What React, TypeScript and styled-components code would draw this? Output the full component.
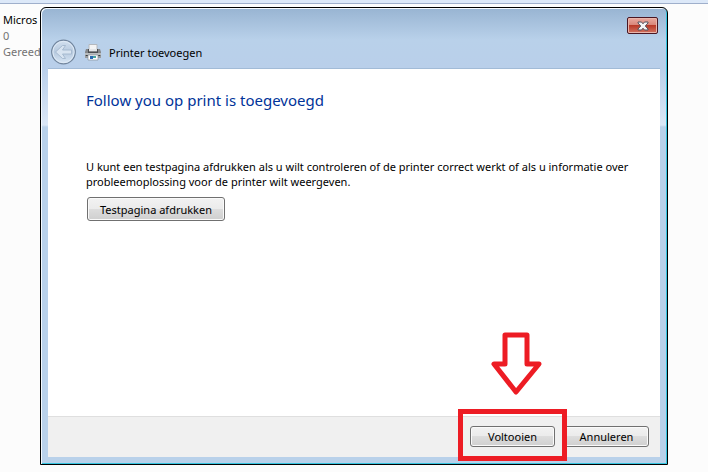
import React from 'react';
import styled, { createGlobalStyle } from 'styled-components';

const GlobalStyle = createGlobalStyle`
  *, *::before, *::after { box-sizing: border-box; }
  body {
    margin: 0;
    background: #fcfcfc;
    color: #000;
    font-family: "Noto Sans", "Segoe UI", sans-serif;
    font-size: 11px;
    line-height: 15px;
  }
`;

const Desktop = styled.div`
  position: relative;
  min-height: 100vh;
  overflow: hidden;
`;

const ToolbarEdge = styled.div`
  height: 4px;
  background: #dce8f8;
  border-bottom: 1px solid #9fafcb;
`;

const PrinterStatus = styled.section`
  display: grid;
  justify-items: start;
  padding: 8px 3px;
  line-height: 16px;
`;

const StatusLine = styled.span<{ $muted?: boolean }>`
  color: ${({ $muted }) => ($muted ? '#737373' : '#000')};
`;

const Dialog = styled.main`
  position: absolute;
  inset: 7px 40px;
  display: flex;
  flex-direction: column;
  padding: 0 7px 7px;
  border: 1px solid #000;
  border-radius: 6px 6px 0 0;
  background: linear-gradient(#98b4d2, #b9d1ea 32px, #b9cfea 60px, #dbe7f6 117px, #b9d1ea 119px);
  box-shadow: inset 1px 1px #f4faff, inset -1px -1px #35c5e0;
`;

const TitleBar = styled.header`
  display: flex;
  justify-content: space-between;
  height: 61px;
  border-bottom: 1px solid #a2bbd7;
`;

const Caption = styled.div`
  display: flex;
  align-items: center;
  gap: 8px;
  padding: 28px 0 0 2px;
`;

const BackButton = styled.button`
  display: flex;
  width: 26px;
  height: 26px;
  padding: 0;
  border: 0;
  background: none;
`;

const Title = styled.h1`
  margin: 0;
  font-size: 11px;
  font-weight: 400;
`;

const CloseButton = styled.button`
  display: flex;
  align-items: center;
  justify-content: center;
  width: 31px;
  height: 17px;
  margin: 9px 2px 0;
  padding: 0;
  border: 1px solid #4a1622;
  border-radius: 2px;
  background: linear-gradient(#e9aaa0, #d98679 46%, #b93a28 50%, #d17361);
  box-shadow: inset 0 0 0 1px #e9b5ab;
`;

const Content = styled.section`
  flex: 1;
  display: flex;
  flex-direction: column;
  align-items: flex-start;
  padding: 20px 20px 20px 38px;
  background: #fff;
`;

const Heading = styled.h2`
  margin: 0 0 48px;
  color: #003399;
  font-size: 15px;
  font-weight: 400;
  line-height: 22px;
`;

const Message = styled.p`
  margin: 0 0 8px;
`;

const PushButton = styled.button<{ $wide?: boolean }>`
  width: ${({ $wide }) => ($wide ? '138px' : '85px')};
  height: ${({ $wide }) => ($wide ? '24px' : '21px')};
  margin-left: ${({ $wide }) => ($wide ? '1px' : '0')};
  padding: 0;
  border: 1px solid #707070;
  border-radius: 3px;
  background: linear-gradient(#f2f2f2, #ebebeb 50%, #dddddd 50%, #cfcfcf);
  box-shadow: inset 0 0 0 1px #fafafa;
  color: #000;
  font: inherit;
  white-space: nowrap;
`;

const Footer = styled.footer`
  display: flex;
  justify-content: flex-end;
  gap: 9px;
  padding: 9px 11px 10px;
  border-top: 1px solid #dfdfdf;
  background: #f0f0f0;
`;

const Highlighted = styled.div`
  position: relative;
  display: flex;
`;

const HighlightBox = styled.div`
  position: absolute;
  inset: -17px -12px -14px;
  border: 5px solid #ed1c24;
  pointer-events: none;
`;

const HighlightArrow = styled.svg`
  position: absolute;
  left: 20px;
  bottom: 50px;
`;

const BackIcon = () => (
  <svg width="26" height="26" viewBox="0 0 26 26" aria-hidden="true">
    <defs>
      <linearGradient id="orb" x1="0" y1="0" x2="0" y2="1">
        <stop offset="0" stopColor="#d3e0ef" />
        <stop offset=".5" stopColor="#b7cadf" />
        <stop offset="1" stopColor="#d8e6f5" />
      </linearGradient>
    </defs>
    <circle cx="13.500" cy="13" r="11.800" fill="url(#orb)" stroke="#71859d" strokeWidth="1.200" />
    <circle cx="13.500" cy="13" r="10.600" fill="none" stroke="#e0ebf6" />
    <path d="M5.500 13l7-6.500h3L12.500 11h9v4h-9l3 4.500h-3z" fill="#d8e4f1" stroke="#a3b7cd" strokeWidth=".9" strokeLinejoin="round" />
  </svg>
);

const PrinterIcon = () => (
  <svg width="17" height="17" viewBox="0 0 17 17" aria-hidden="true">
    <path d="M5 .5h8V7H5z" fill="#f4f4f4" stroke="#b4b8bd" />
    <path d="M2 5h3v2h8V5h3l1 3v6H1V8z" fill="#85888b" />
    <path d="M4 5h1v3h8V5h1v4H4z" fill="#4c4e51" />
    <path d="M5 5h8v2H5z" fill="#e3e5e7" />
    <path d="M1 9h16v2H1z" fill="#b9bcbe" />
    <path d="M2 11h14v1H2z" fill="#393c3f" />
    <path d="M1 12h16v2H1z" fill="#9a9da0" />
    <path d="M4 11h10v5H4z" fill="#fff" stroke="#8b929b" strokeWidth=".7" />
    <path d="M6 12h3v3H6z" fill="#2b69b3" />
    <path d="M9 12h3v2H9z" fill="#48a5a0" />
  </svg>
);

const CloseIcon = () => (
  <svg width="12" height="10" viewBox="0 0 12 10" aria-hidden="true">
    <path d="M1 1h3.500L6 2.800 7.500 1H11v1L8.300 5 11 8v1H7.500L6 7.200 4.500 9H1V8l2.700-3L1 2z" fill="#f5f5f5" stroke="#53535f" strokeLinejoin="round" />
  </svg>
);

export default function App() {
  return (
    <>
      <GlobalStyle />
      <Desktop>
        <ToolbarEdge />
        <PrinterStatus>
          <StatusLine>Micros</StatusLine>
          <StatusLine $muted>0</StatusLine>
          <StatusLine $muted>Gereed</StatusLine>
        </PrinterStatus>
        <Dialog role="dialog" aria-labelledby="dialog-title">
          <TitleBar>
            <Caption>
              <BackButton type="button" aria-label="Vorige" disabled>
                <BackIcon />
              </BackButton>
              <PrinterIcon />
              <Title id="dialog-title">Printer toevoegen</Title>
            </Caption>
            <CloseButton type="button" aria-label="Sluiten">
              <CloseIcon />
            </CloseButton>
          </TitleBar>
          <Content>
            <Heading>Follow you op print is toegevoegd</Heading>
            <Message>
              U kunt een testpagina afdrukken als u wilt controleren of de printer correct werkt of als u informatie over
              probleemoplossing voor de printer wilt weergeven.
            </Message>
            <PushButton type="button" $wide>Testpagina afdrukken</PushButton>
          </Content>
          <Footer>
            <Highlighted>
              <PushButton type="button">Voltooien</PushButton>
              <HighlightBox />
              <HighlightArrow width="53" height="66" viewBox="0 0 53 66" aria-hidden="true">
                <path
                  d="M15 4h22v29h12L26 61 4 33h11z"
                  fill="none"
                  stroke="#ed1c24"
                  strokeWidth="5"
                  strokeLinejoin="round"
                />
              </HighlightArrow>
            </Highlighted>
            <PushButton type="button">Annuleren</PushButton>
          </Footer>
        </Dialog>
      </Desktop>
    </>
  );
}
